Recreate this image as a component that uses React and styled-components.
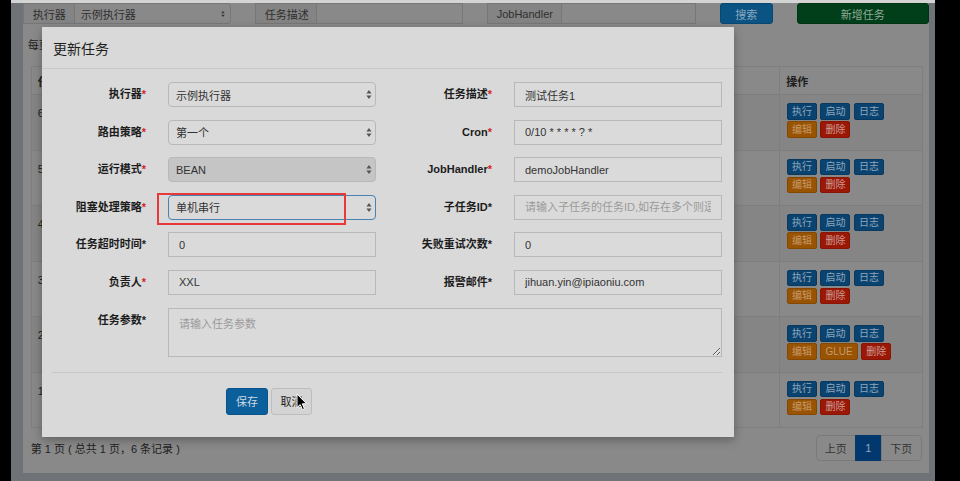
import React from 'react';
import styled, { createGlobalStyle } from 'styled-components';

const FONT = `"Liberation Sans", "Noto Sans CJK SC", sans-serif`;

const GlobalStyle = createGlobalStyle`
  html, body { margin: 0; padding: 0; background: #000; }
  body { font-family: ${FONT}; font-size: 11px; }
  * { box-sizing: border-box; }
`;

const Frame = styled.div`
  position: relative;
  width: 960px;
  height: 481px;
  overflow: hidden;
  display: flex;
  background: #000;
`;

const Gutter = styled.div`
  width: 11px;
  flex: none;
  background: #000;
`;

const Main = styled.div`
  width: 924px;
  flex: none;
  background: #6f7378;
  display: flex;
  flex-direction: column;
`;

const TopStrip = styled.div`
  height: 3px;
  background: #d4d4d4;
`;

const Panel = styled.div`
  margin-left: 11.7px;
  width: 906.3px;
  height: 470px;
  background: #898989;
  display: flex;
  flex-direction: column;
`;

/* ---------- filter bar ---------- */
const FilterBar = styled.div`
  display: grid;
  grid-template-columns: 208px 208px 209px 53px 132px;
  column-gap: 24px;
  height: 21px;
`;

const InputGroup = styled.div`
  display: flex;
  height: 100%;
`;

const Addon = styled.div`
  width: ${p => p.$w}px;
  flex: none;
  display: flex;
  align-items: center;
  padding-left: 9px;
  background: #848484;
  border: 1px solid #777;
  color: #2f2f2f;
  font-size: 11px;
  white-space: nowrap;
`;

const FilterField = styled.div`
  flex: 1;
  display: flex;
  align-items: center;
  justify-content: space-between;
  padding: 0 5px 0 6px;
  background: #898989;
  border: 1px solid #777;
  border-left: none;
  border-radius: ${p => (p.$round ? '0 4px 4px 0' : '0')};
  color: #2f2f2f;
  font-size: 11px;
`;

const BarButton = styled.div`
  display: flex;
  align-items: center;
  justify-content: center;
  border-radius: 3px;
  font-size: 11px;
  background: ${p => (p.$tone === 'green' ? '#003f19' : '#0a5383')};
  color: ${p => (p.$tone === 'green' ? '#93ab99' : '#8aa8bf')};
  border: 1px solid ${p => (p.$tone === 'green' ? '#003414' : '#084873')};
`;

const PageSize = styled.div`
  margin-top: 11px;
  margin-left: 5px;
  height: 20px;
  line-height: 20px;
  color: #1e1e1e;
  font-size: 11px;
`;

/* ---------- table ---------- */
const Table = styled.table`
  margin: 11px 0 0 8px;
  width: 891px;
  table-layout: fixed;
  border-collapse: collapse;
  border: 1px solid #7e7e7e;
  font-size: 11px;
  color: #1e1e1e;
`;

const Th = styled.th`
  height: 28.3px;
  padding: 0 6px;
  text-align: left;
  font-weight: bold;
  border: 1px solid #7e7e7e;
  white-space: nowrap;
  overflow: hidden;
`;

const Tr = styled.tr`
  height: 55.5px;
  background: ${p => (p.$odd ? '#858585' : '#898989')};
`;

const Td = styled.td`
  vertical-align: top;
  padding: 8px 6px 0 ${p => (p.$op ? '6.7px' : '6px')};
  line-height: 20px;
  border: 1px solid #7e7e7e;
  border-width: 1px ${p => (p.$op ? '1px' : '0')} 0 ${p => (p.$op ? '1px' : '0')};
  white-space: nowrap;
  overflow: hidden;
`;

const OpLine = styled.div`
  display: flex;
  gap: 3.5px;
  margin-bottom: 1.5px;
`;

const OP_TONES = {
  blue: { bg: '#0a4370', fg: '#8ea6ba', bd: '#083a61' },
  orange: { bg: '#985303', fg: '#c79a6a', bd: '#854802' },
  red: { bg: '#9c1806', fg: '#c99b94', bd: '#881404' },
};

const OpButton = styled.div`
  height: 16.5px;
  padding: 0 4px;
  min-width: 27px;
  display: flex;
  align-items: center;
  justify-content: center;
  border-radius: 2px;
  font-size: 10px;
  line-height: 1;
  background: ${p => OP_TONES[p.$tone].bg};
  color: ${p => OP_TONES[p.$tone].fg};
  border: 1px solid ${p => OP_TONES[p.$tone].bd};
`;

/* ---------- footer ---------- */
const Footer = styled.div`
  margin: 6.7px 0 0 8px;
  width: 891px;
  display: flex;
  align-items: center;
  justify-content: space-between;
`;

const FooterText = styled.div`
  font-size: 11px;
  color: #1e1e1e;
  white-space: pre;
`;

const Pager = styled.div`
  display: flex;
  height: 26px;
`;

const PageItem = styled.div`
  width: ${p => p.$w}px;
  display: flex;
  align-items: center;
  justify-content: center;
  font-size: 11px;
  border: 1px solid ${p => (p.$active ? '#03386f' : '#7a7a7a')};
  margin-left: -1px;
  background: ${p => (p.$active ? '#03386f' : '#898989')};
  color: ${p => (p.$active ? '#93a9c0' : '#353535')};
  &:first-child { border-radius: 4px 0 0 4px; margin-left: 0; }
  &:last-child { border-radius: 0 4px 4px 0; }
`;

/* ---------- modal ---------- */
const Modal = styled.div`
  position: absolute;
  left: 42px;
  top: 27px;
  width: 692px;
  height: 410px;
  background: #d9d9d9;
  box-shadow: 0 3px 9px rgba(0, 0, 0, 0.3);
  display: flex;
  flex-direction: column;
`;

const ModalHeader = styled.div`
  height: 42px;
  flex: none;
  display: flex;
  align-items: center;
  padding: 0 11px;
  border-bottom: 1px solid #c8c8c8;
  font-size: 14px;
  color: #1e1e1e;
`;

const ModalBody = styled.div`
  padding: 13px 11px 0 10px;
`;

const FormGrid = styled.div`
  display: grid;
  grid-template-columns: 116px 208px 138px 208px;
  grid-template-rows: repeat(6, 25px) 49px;
  row-gap: 12.6px;
`;

const Label = styled.div`
  display: flex;
  align-items: ${p => (p.$top ? 'flex-start' : 'center')};
  line-height: 25px;
  justify-content: flex-end;
  padding-right: 22px;
  font-size: 11px;
  font-weight: bold;
  color: #1c1c1c;
  white-space: nowrap;
`;

const Star = styled.span`
  color: ${p => (p.$red ? '#d81e1e' : '#1c1c1c')};
`;

const SelectBox = styled.div`
  height: 25px;
  display: flex;
  align-items: center;
  justify-content: space-between;
  padding: 0 3.5px 0 7px;
  border: 1px solid ${p => (p.$focus ? '#4683b3' : '#b8b8b8')};
  border-radius: 4px;
  background: ${p => (p.$disabled ? '#c5c5c5' : '#dadada')};
  color: #333;
  font-size: 11px;
`;

const TextInput = styled.input`
  width: 100%;
  height: 25px;
  padding: 0 10px;
  border: 1px solid #b8b8b8;
  border-radius: 0;
  background: #dadada;
  font: 11px ${FONT};
  color: #333;
  outline: none;
  &::placeholder { color: #9b9b9b; }
`;

const TextArea = styled.textarea`
  grid-column: 2 / span 3;
  height: 49px;
  padding: 6px 10px;
  border: 1px solid #b8b8b8;
  border-radius: 0;
  background: #dadada;
  font: 11px ${FONT};
  color: #333;
  resize: vertical;
  outline: none;
  &::placeholder { color: #9b9b9b; }
`;

const Divider = styled.div`
  margin-top: 15px;
  width: 670px;
  border-top: 1px solid #c6c6c6;
`;

const ButtonRow = styled.div`
  margin-top: 15.5px;
  padding-left: 174px;
  display: flex;
  gap: 3px;
`;

const ModalButton = styled.div`
  width: ${p => p.$w}px;
  height: 26.5px;
  display: flex;
  align-items: center;
  justify-content: center;
  border-radius: 3px;
  font-size: 11px;
  background: ${p => (p.$primary ? '#0b5f9b' : '#d4d4d4')};
  color: ${p => (p.$primary ? '#cfd9e3' : '#222')};
  border: 1px solid ${p => (p.$primary ? '#09548a' : '#bdbdbd')};
`;

const Highlight = styled.div`
  position: absolute;
  left: 157px;
  top: 193px;
  width: 189px;
  height: 32px;
  border: 2.5px solid #e8383a;
  pointer-events: none;
`;

const CursorWrap = styled.div`
  position: absolute;
  left: 296px;
  top: 393px;
  width: 12px;
  height: 18px;
  pointer-events: none;
`;

const Arrows = ({ size = 9, color = '#555' }) => (
  <svg width={size * 0.66} height={size} viewBox="0 0 6 9">
    <path d="M3 0 L5.6 3.4 H0.4 Z M3 9 L5.6 5.6 H0.4 Z" fill={color} />
  </svg>
);

const Cursor = () => (
  <CursorWrap>
    <svg width="12" height="18" viewBox="0 0 12 18">
      <path d="M1 1 L1 14.5 L4.2 11.6 L6.4 16.6 L8.4 15.7 L6.3 10.8 L10.6 10.8 Z" fill="#000" stroke="#fff" strokeWidth="1" strokeLinejoin="round" />
    </svg>
  </CursorWrap>
);

const Req = ({ text, red, top }) => (
  <Label $top={top}>
    {text}
    <Star $red={red}>*</Star>
  </Label>
);

const rows = [
  { id: 6, glue: false },
  { id: 5, glue: false },
  { id: 4, glue: false },
  { id: 3, glue: false },
  { id: 2, glue: true },
  { id: 1, glue: false },
];

export default function App() {
  return (
    <>
      <GlobalStyle />
      <Frame>
        <Gutter />
        <Main>
          <TopStrip />
          <Panel>
            <FilterBar>
              <InputGroup>
                <Addon $w={52}>执行器</Addon>
                <FilterField $round>
                  示例执行器
                  <Arrows size={6} color="#333" />
                </FilterField>
              </InputGroup>
              <InputGroup>
                <Addon $w={62}>任务描述</Addon>
                <FilterField />
              </InputGroup>
              <InputGroup>
                <Addon $w={75}>JobHandler</Addon>
                <FilterField />
              </InputGroup>
              <BarButton>搜索</BarButton>
              <BarButton $tone="green">新增任务</BarButton>
            </FilterBar>

            <PageSize>每页 10 条记录</PageSize>

            <Table>
              <colgroup>
                <col style={{ width: 90 }} />
                <col style={{ width: 200 }} />
                <col style={{ width: 180 }} />
                <col style={{ width: 150 }} />
                <col style={{ width: 128.6 }} />
                <col style={{ width: 142.4 }} />
              </colgroup>
              <thead>
                <tr>
                  <Th>任务ID</Th>
                  <Th>任务描述</Th>
                  <Th>运行模式</Th>
                  <Th>Cron</Th>
                  <Th>负责人</Th>
                  <Th>操作</Th>
                </tr>
              </thead>
              <tbody>
                {rows.map((r, i) => (
                  <Tr key={r.id} $odd={i % 2 === 0}>
                    <Td>{r.id}</Td>
                    <Td>测试任务{r.id}</Td>
                    <Td>BEAN</Td>
                    <Td>0/10</Td>
                    <Td>XXL</Td>
                    <Td $op>
                      <OpLine>
                        <OpButton $tone="blue">执行</OpButton>
                        <OpButton $tone="blue">启动</OpButton>
                        <OpButton $tone="blue">日志</OpButton>
                      </OpLine>
                      <OpLine>
                        <OpButton $tone="orange">编辑</OpButton>
                        {r.glue && <OpButton $tone="orange">GLUE</OpButton>}
                        <OpButton $tone="red">删除</OpButton>
                      </OpLine>
                    </Td>
                  </Tr>
                ))}
              </tbody>
            </Table>

            <Footer>
              <FooterText>第 1 页 ( 总共 1 页，6 条记录 )</FooterText>
              <Pager>
                <PageItem $w={40}>上页</PageItem>
                <PageItem $w={27} $active>1</PageItem>
                <PageItem $w={41}>下页</PageItem>
              </Pager>
            </Footer>
          </Panel>
        </Main>

        <Modal>
          <ModalHeader>更新任务</ModalHeader>
          <ModalBody>
            <FormGrid>
              <Req text="执行器" red />
              <SelectBox>示例执行器<Arrows /></SelectBox>
              <Req text="任务描述" red />
              <TextInput readOnly defaultValue="测试任务1" />

              <Req text="路由策略" red />
              <SelectBox>第一个<Arrows /></SelectBox>
              <Req text="Cron" red />
              <TextInput readOnly defaultValue="0/10 * * * * ? *" />

              <Req text="运行模式" red />
              <SelectBox $disabled>BEAN<Arrows /></SelectBox>
              <Req text="JobHandler" red />
              <TextInput readOnly defaultValue="demoJobHandler" />

              <Req text="阻塞处理策略" red />
              <SelectBox $focus>单机串行<Arrows /></SelectBox>
              <Req text="子任务ID" />
              <TextInput readOnly placeholder="请输入子任务的任务ID,如存在多个则逗号分隔" />

              <Req text="任务超时时间" />
              <TextInput readOnly defaultValue="0" />
              <Req text="失败重试次数" />
              <TextInput readOnly defaultValue="0" />

              <Req text="负责人" red />
              <TextInput readOnly defaultValue="XXL" />
              <Req text="报警邮件" />
              <TextInput readOnly defaultValue="jihuan.yin@ipiaoniu.com" />

              <Req text="任务参数" top />
              <TextArea readOnly placeholder="请输入任务参数" />
            </FormGrid>
            <Divider />
            <ButtonRow>
              <ModalButton $primary $w={42}>保存</ModalButton>
              <ModalButton $w={41}>取消</ModalButton>
            </ButtonRow>
          </ModalBody>
        </Modal>

        <Highlight />
        <Cursor />
      </Frame>
    </>
  );
}
